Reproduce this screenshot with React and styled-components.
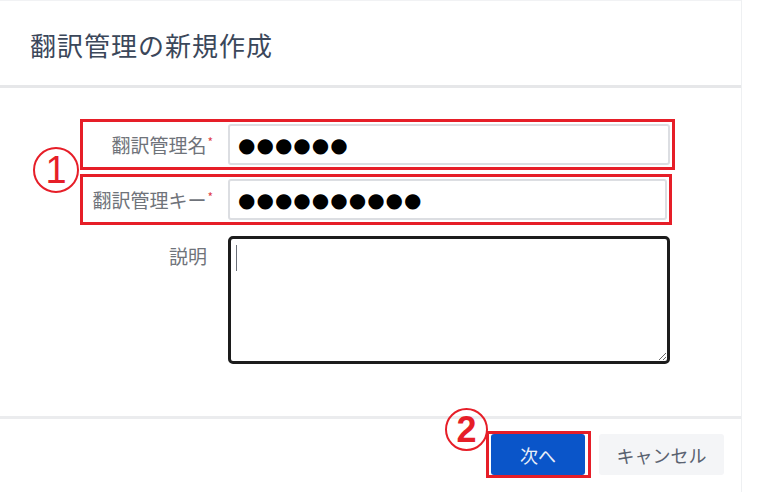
import React from "react";
import styled, { createGlobalStyle } from "styled-components";

const GlobalStyle = createGlobalStyle`
  html, body {
    margin: 0;
    padding: 0;
    background: #ffffff;
  }
  body {
    font-family: "Noto Sans CJK JP", "Noto Sans", sans-serif;
  }
`;

const fields = [
  { label: "翻訳管理名", dots: 6, width: 595 },
  { label: "翻訳管理キー", dots: 10, width: 592 },
];

const App = () => {
  return (
    <>
      <GlobalStyle />
      <Dialog>
        <Header>
          <Title>翻訳管理の新規作成</Title>
        </Header>
        <Body>
          <Marker1>1</Marker1>
          {fields.map((f) => (
            <Row marked width={f.width} key={f.label}>
              <Label>
                {f.label}
                <Req>*</Req>
              </Label>
              <Input>
                <Dots>{"●".repeat(f.dots)}</Dots>
              </Input>
            </Row>
          ))}
          <Row top width={595}>
            <Label top plain>
              説明
            </Label>
            <AreaWrap>
              <TextArea />
              <Caret />
            </AreaWrap>
          </Row>
        </Body>
        <Footer>
          <NextMark>
            <Marker2>2</Marker2>
            <PrimaryButton>次へ</PrimaryButton>
          </NextMark>
          <CancelButton>キャンセル</CancelButton>
        </Footer>
      </Dialog>
    </>
  );
};

const Dialog = styled.div`
  width: 742px;
  border-top: 1px solid #f1f2f4;
  border-right: 1px solid #eef0f2;
  background: #ffffff;
  box-sizing: border-box;
`;

const Header = styled.div`
  height: 87px;
  display: flex;
  align-items: center;
  padding: 2px 0 0 30px;
  box-sizing: border-box;
  border-bottom: 3px solid #e6e7e9;
`;

const Title = styled.h1`
  margin: 0;
  font-size: 26px;
  font-weight: 400;
  letter-spacing: 1px;
  color: #3b475a;
`;

const Body = styled.div`
  position: relative;
  height: 331px;
  padding: 31px 0 0 80px;
  box-sizing: border-box;
  display: flex;
  flex-direction: column;
  gap: 4px;
  border-bottom: 3px solid #ebecee;
`;

const Row = styled.div`
  width: ${(p) => p.width}px;
  display: flex;
  align-items: ${(p) => (p.top ? "flex-start" : "center")};
  gap: 15px;
  border: 3px solid ${(p) => (p.marked ? "#e61e28" : "transparent")};
  padding: 2px 2px 2px 0;
  margin-top: ${(p) => (p.top ? "2px" : "0")};
  box-sizing: border-box;
`;

const Label = styled.div`
  width: 130px;
  flex-shrink: 0;
  text-align: right;
  font-size: 19px;
  color: #6f737a;
  padding-top: ${(p) => (p.top ? "6px" : "0")};
  padding-right: ${(p) => (p.plain ? "6px" : "0")};
  box-sizing: border-box;
  white-space: nowrap;
`;

const Req = styled.sup`
  color: #e0404a;
  font-size: 12px;
  margin-left: 1px;
  vertical-align: 6px;
`;

const Input = styled.div`
  flex: 1;
  height: 41px;
  border: 2px solid #dcdee2;
  border-radius: 3px;
  background: #ffffff;
  display: flex;
  align-items: center;
  padding-left: 8px;
  box-sizing: border-box;
`;

const Dots = styled.span`
  font-family: "DejaVu Sans", sans-serif;
  font-size: 20px;
  letter-spacing: 1px;
  color: #000000;
  line-height: 1;
`;

const AreaWrap = styled.div`
  position: relative;
  flex: 1;
  display: flex;
`;

const TextArea = styled.textarea`
  width: 100%;
  height: 128px;
  border: 3px solid #1c1c1c;
  border-radius: 5px;
  box-sizing: border-box;
  outline: none;
  font-family: inherit;
  font-size: 16px;
  background: #ffffff;
`;

const Caret = styled.span`
  position: absolute;
  left: 8px;
  top: 9px;
  width: 1px;
  height: 26px;
  background: #6a6f78;
`;

const Marker = styled.div`
  position: absolute;
  width: 46px;
  height: 46px;
  border: 2px solid #e61e28;
  border-radius: 50%;
  box-sizing: border-box;
  color: #e61e28;
  font-family: "Liberation Sans", Arial, sans-serif;
  font-size: 38px;
  font-weight: 700;
  display: flex;
  align-items: center;
  justify-content: center;
  line-height: 1;
`;

const Marker1 = styled(Marker)`
  left: 33px;
  top: 59px;
  font-weight: 400;
`;

const Marker2 = styled(Marker)`
  left: -44px;
  top: -26px;
  width: 43px;
  height: 43px;
  font-size: 36px;
`;

const Footer = styled.div`
  display: flex;
  justify-content: flex-end;
  align-items: center;
  gap: 8px;
  padding: 12px 17px 15px 0;
`;

const NextMark = styled.div`
  position: relative;
  border: 3px solid #e61e28;
  padding: 0 3px 0 2px;
  display: flex;
`;

const PrimaryButton = styled.button`
  width: 94px;
  height: 41px;
  border: none;
  border-radius: 3px;
  background: #0a55c9;
  color: #e8eef8;
  font-family: inherit;
  font-size: 18px;
  cursor: pointer;
`;

const CancelButton = styled.button`
  width: 125px;
  height: 41px;
  border: none;
  border-radius: 3px;
  background: #f4f5f7;
  color: #5a6270;
  font-family: inherit;
  font-size: 18px;
  cursor: pointer;
`;

export default App;
